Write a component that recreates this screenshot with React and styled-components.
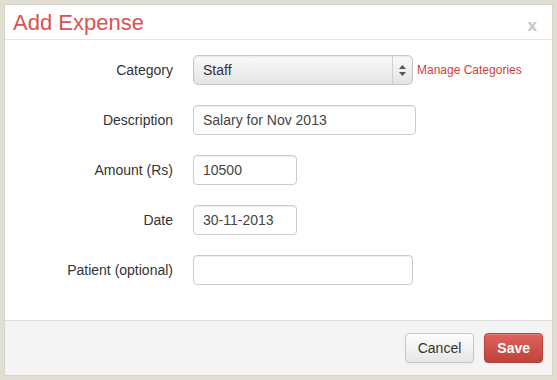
import React, { useState } from 'react'
import styled, { createGlobalStyle } from 'styled-components'

const GlobalStyle = createGlobalStyle`
  html, body { margin: 0; padding: 0; }
  body {
    background: #e0ddd1;
    font-family: "Liberation Sans", Arial, sans-serif;
    width: 557px;
    height: 380px;
    overflow: hidden;
  }
`

const fields = [
    { id: 'description', label: 'Description', value: 'Salary for Nov 2013', width: 223 },
    { id: 'amount', label: 'Amount (Rs)', value: '10500', width: 104 },
    { id: 'date', label: 'Date', value: '30-11-2013', width: 104 },
    { id: 'patient', label: 'Patient (optional)', value: '', width: 220 },
]

const AddExpense = () => {
    const [data, setData] = useState(fields)

    const update = (id, value) =>
        setData(data.map((f) => (f.id === id ? { ...f, value } : f)))

    return <Page>
        <GlobalStyle />
        <Modal>
            <Header>
                <Title>Add Expense</Title>
                <Close>x</Close>
            </Header>
            <Body>
                <Row>
                    <Label>Category</Label>
                    <Select>
                        <span>Staff</span>
                        <Arrows>
                            <svg width="7" height="11" viewBox="0 0 7 11">
                                <path d="M3.5 0 L7 4 L0 4 Z" fill="#555" />
                                <path d="M3.5 11 L7 7 L0 7 Z" fill="#555" />
                            </svg>
                        </Arrows>
                    </Select>
                    <Manage href="#">Manage Categories</Manage>
                </Row>
                {data.map((item) => {
                    return <Row key={item.id}>
                        <Label>{item.label}</Label>
                        <Input
                            $width={item.width}
                            value={item.value}
                            onChange={(e) => update(item.id, e.target.value)}
                        />
                    </Row>
                })}
            </Body>
            <Footer>
                <Button>Cancel</Button>
                <Button $primary>Save</Button>
            </Footer>
        </Modal>
    </Page>
}

const Page = styled.div`
padding: 4px 4px 4px 4px;
`

const Modal = styled.div`
width: 547px;
height: 370px;
background: #fff;
border: 1px solid #d6d3c8;
display: flex;
flex-direction: column;
`

const Header = styled.div`
height: 34px;
border-bottom: 1px solid #e5e5e5;
display: flex;
align-items: center;
justify-content: space-between;
padding: 0 15px 0 8px;
`

const Title = styled.h3`
margin: 0;
font-size: 22px;
font-weight: normal;
color: #d9534f;
line-height: 1;
padding-top: 1px;
`

const Close = styled.span`
color: #c4c4c4;
font-weight: bold;
font-size: 17px;
padding-top: 8px;
`

const Body = styled.div`
flex: 1;
padding: 15px 0 0 0;
`

const Row = styled.div`
display: flex;
align-items: center;
height: 30px;
margin-bottom: 20px;
`

const Label = styled.label`
width: 168px;
text-align: right;
padding-right: 20px;
font-size: 14px;
color: #333;
`

const Select = styled.div`
width: 220px;
height: 30px;
box-sizing: border-box;
border: 1px solid #c8c8c8;
border-radius: 5px;
background: linear-gradient(#fafafa, #e4e4e4);
box-shadow: inset 0 1px 2px rgba(0,0,0,0.08);
display: flex;
align-items: center;
justify-content: space-between;
font-size: 14px;
color: #333;
span { padding-left: 9px; }
`

const Arrows = styled.div`
width: 19px;
height: 100%;
border-left: 1px solid #cfcfcf;
display: flex;
align-items: center;
justify-content: center;
`

const Manage = styled.a`
margin-left: 4px;
font-size: 12px;
color: #cf3f3a;
text-decoration: none;
`

const Input = styled.input`
width: ${(p) => p.$width}px;
height: 30px;
box-sizing: border-box;
border: 1px solid #ccc;
border-radius: 4px;
box-shadow: inset 0 1px 1px rgba(0,0,0,0.075);
padding: 0 9px;
font-family: "Liberation Sans", Arial, sans-serif;
font-size: 14px;
color: #444;
outline: none;
`

const Footer = styled.div`
height: 55px;
box-sizing: border-box;
border-top: 1px solid #ddd;
background: #f4f4f4;
display: flex;
justify-content: flex-end;
align-items: center;
gap: 10px;
padding: 0 9px 0 0;
`

const Button = styled.button`
height: 30px;
box-sizing: border-box;
padding: 0 ${(p) => (p.$primary ? '12px' : '12px')};
border-radius: 4px;
font-family: "Liberation Sans", Arial, sans-serif;
font-size: 14px;
font-weight: ${(p) => (p.$primary ? 'bold' : 'normal')};
color: ${(p) => (p.$primary ? '#fff' : '#333')};
border: 1px solid ${(p) => (p.$primary ? '#b3413c' : '#c8c8c8')};
background: ${(p) => (p.$primary
        ? 'linear-gradient(#e0625d, #c0423c)'
        : 'linear-gradient(#fdfdfd, #e6e6e6)')};
box-shadow: inset 0 1px 0 rgba(255,255,255,0.2), 0 1px 2px rgba(0,0,0,0.05);
`

export default AddExpense
